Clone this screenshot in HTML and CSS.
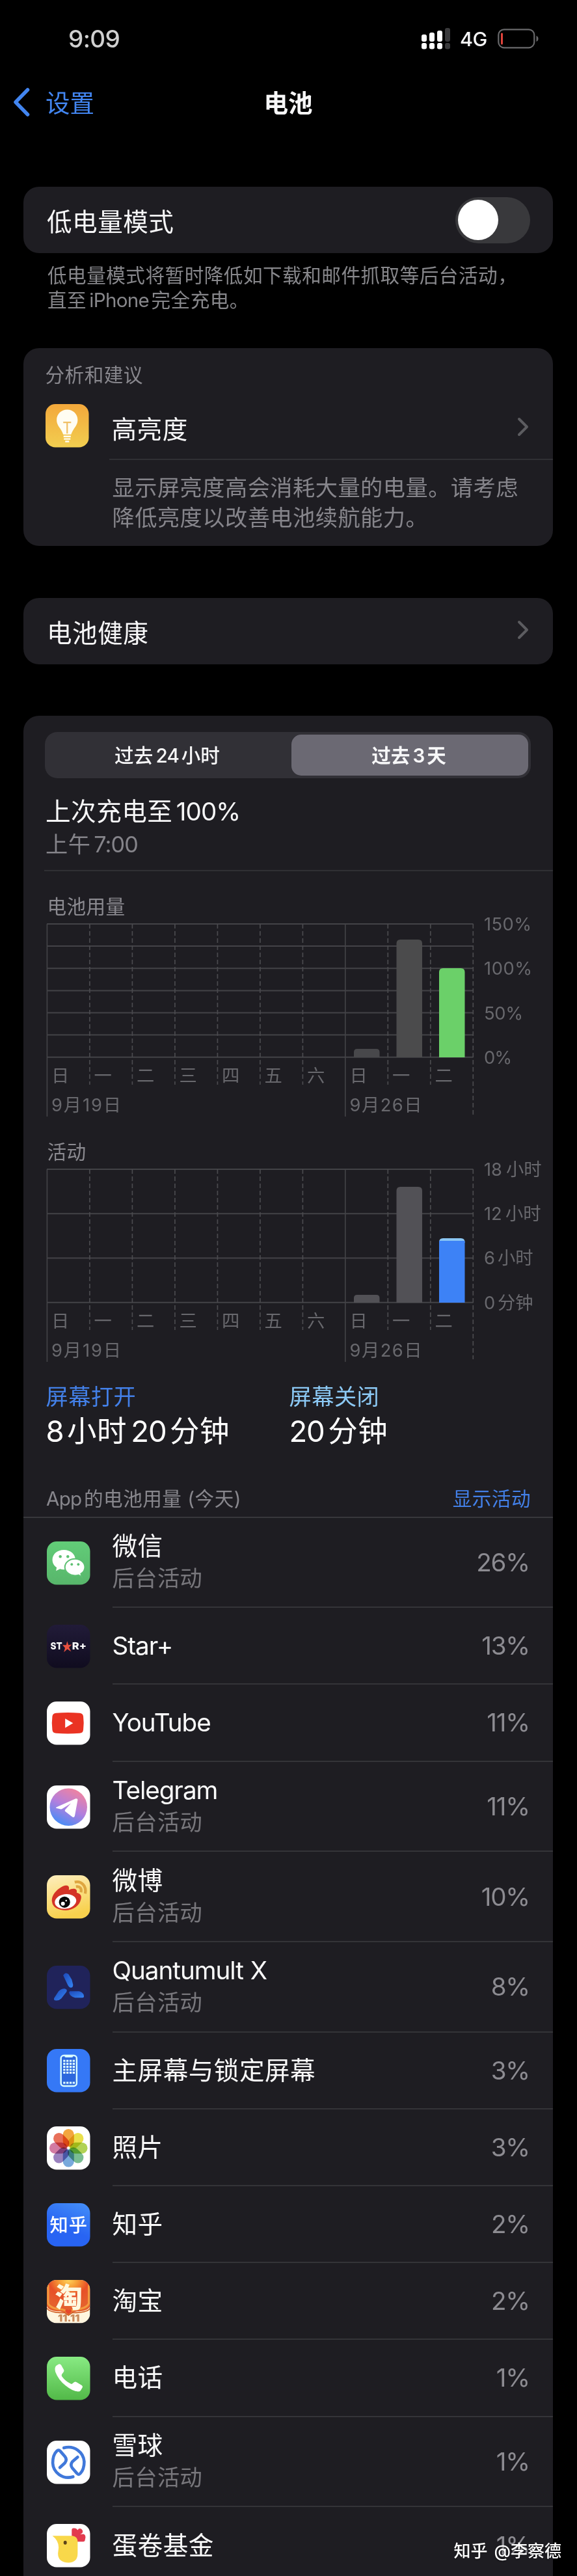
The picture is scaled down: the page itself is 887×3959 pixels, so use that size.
FILE: index.html
```html
<!DOCTYPE html>
<html lang="zh-CN">
<head>
<meta charset="utf-8">
<title>电池</title>
<link rel="stylesheet" href="styles.css">
</head>
<body>
<main class="page">
  <header class="status">
    <span class="clock">9:09</span>
    <svg class="signal" viewBox="0 0 44 34" width="44" height="34">
      <g fill="#fff"><rect x="0" y="10" width="8" height="11" rx="3"/><rect x="12" y="7" width="8" height="14" rx="3"/><rect x="24" y="4" width="8" height="17" rx="3"/><rect x="0" y="23" width="8" height="9.500" rx="3"/><rect x="12" y="23" width="8" height="9.500" rx="3"/><rect x="24" y="23" width="8" height="9.500" rx="3"/></g>
      <g fill="#3a3a3c"><rect x="36" y="0" width="8" height="21" rx="3"/><rect x="36" y="23" width="8" height="9.500" rx="3"/></g>
    </svg>
    <span class="network">4G</span>
    <svg class="battery" viewBox="0 0 64 32" width="64" height="32">
      <rect x="1.300" y="1.300" width="55" height="28" rx="8.500" fill="none" stroke="#69696b" stroke-width="2.200"/>
      <rect x="5" y="6.500" width="3" height="18" rx="1.500" fill="#e0443c"/>
      <path d="M59.500 11v9c4-1.500 4-7.500 0-9z" fill="#69696b"/>
    </svg>
  </header>
  <nav class="nav">
    <a class="back"><svg viewBox="0 0 26 44" width="26" height="44"><path d="M22.500 3 4 22l18.500 19" fill="none" stroke="#4285f0" stroke-width="5.500" stroke-linecap="round" stroke-linejoin="round"/></svg><span>设置</span></a>
    <h1 class="title">电池</h1>
  </nav>

  <section class="card link-card first">
    <span>低电量模式</span>
    <span class="toggle"><i class="knob"></i></span>
  </section>
  <p class="note">低电量模式将暂时降低如下载和邮件抓取等后台活动，<br>直至<span class="n">iPhone</span>完全充电。</p>

  <section class="card insight">
    <h2 class="caption">分析和建议</h2>
    <div class="tip">
      <svg class="icon" viewBox="0 0 66 66">
        <defs><linearGradient id="amber" x2="0" y2="1"><stop stop-color="#f3a83b"/><stop offset="1" stop-color="#f2ce50"/></linearGradient></defs>
        <rect width="66" height="66" rx="15" fill="url(#amber)"/>
        <path d="M33 8.500c-9 0-16 7-16 15.500 0 6 2.500 9 5.500 13.500 2.500 4 3.500 6 4.500 9h12c1-3 2-5 4.500-9C46.500 33 49 30 49 24 49 15.500 42 8.500 33 8.500z" fill="#fffdf2"/>
        <path d="M27 28h12M33 28v17" stroke="#f0bf65" stroke-width="2.200"/><path d="M27.500 49.300h11M28 53.200h10M30 57h6" stroke="#fffdf2" stroke-width="2.400"/>
      </svg>
      <div class="tip-main"><span>高亮度</span><svg class="chev" viewBox="0 0 18 30"><path d="m3 3 12 12L3 27" fill="none" stroke="#5c5c60" stroke-width="4" stroke-linecap="round" stroke-linejoin="round"/></svg></div>
    </div>
    <p class="advice">显示屏亮度高会消耗大量的电量。请考虑<br>降低亮度以改善电池续航能力。</p>
  </section>

  <section class="card link-card health">
    <span>电池健康</span>
    <svg class="chev" viewBox="0 0 18 30"><path d="m3 3 12 12L3 27" fill="none" stroke="#5c5c60" stroke-width="4" stroke-linecap="round" stroke-linejoin="round"/></svg>
  </section>

  <section class="card usage">
    <div class="segments"><span class="segment">过去<span class="n">24</span>小时</span><span class="segment active">过去<span class="n">3</span>天</span></div>
    <h2 class="charged">上次充电至<span class="n">100%</span></h2>
    <p class="charged-at">上午<span class="n">7:00</span></p>
    <hr class="rule">

    <svg class="chart" viewBox="36 1339 814 401" width="814" height="401">
      <text class="name" x="72.500" y="1403.500">电池用量</text>
      <path class="line" d="M72 1420H727.500M72 1454.100H727.500M72 1488.200H727.500M72 1522.400H727.500M72 1556.500H727.500M72 1590.600H727.500M72 1624.700H727.500"/>
      <path class="line thin" d="M72.400 1420V1716M530.800 1420V1716"/>
      <path class="line dash" d="M137.900 1420V1667M203.400 1420V1667M268.900 1420V1667M334.400 1420V1667M399.900 1420V1667M465.400 1420V1667M596.300 1420V1667M661.800 1420V1667M727.300 1420V1713"/>
      <path fill="#48484b" d="M544 1625v-8q0-5 5-5h29.500q5 0 5 5v8z"/>
      <path fill="#4b4b4c" d="M609.500 1625V1450q0-6 6-6H643q6 0 6 6v175z"/>
      <path fill="#6bd069" d="M675 1625V1494q0-6 6-6h27.500q6 0 6 6v131z"/>
      <g class="axis"><text x="79" y="1662.500">日</text><text x="144.500" y="1662.500">一</text><text x="210" y="1662.500">二</text><text x="275.500" y="1662.500">三</text><text x="341" y="1662.500">四</text><text x="406.500" y="1662.500">五</text><text x="472" y="1662.500">六</text><text x="537.500" y="1662.500">日</text><text x="603" y="1662.500">一</text><text x="668.500" y="1662.500">二</text>
      <text x="79" y="1708" textLength="107">9月19日</text><text x="537.500" y="1708" textLength="111">9月26日</text>
      <text x="744" y="1430" textLength="73">150%</text><text x="744" y="1498" textLength="74">100%</text><text x="744" y="1566.500" textLength="60">50%</text><text x="744" y="1634.500" textLength="43">0%</text></g>
    </svg>

    <svg class="chart" viewBox="36 1740 814 370" width="814" height="370">
      <text class="name" x="72.500" y="1780.500">活动</text>
      <path class="line" d="M72 1797H727.500M72 1865.200H727.500M72 1933.500H727.500M72 2001.800H727.500"/>
      <path class="line thin" d="M72.400 1797V2093M530.800 1797V2093"/>
      <path class="line dash" d="M137.900 1797V2044M203.400 1797V2044M268.900 1797V2044M334.400 1797V2044M399.900 1797V2044M465.400 1797V2044M596.300 1797V2044M661.800 1797V2044M727.300 1797V2089"/>
      <path fill="#525156" d="M544 2002v-7q0-5 5-5h29.500q5 0 5 5v7z"/>
      <path fill="#525156" d="M609.500 2002V1830q0-6 6-6H643q6 0 6 6v172z"/>
      <path fill="#8ac6f3" d="M675 1910v-1q0-6 6-6h27.500q6 0 6 6v1z"/>
      <path fill="#3d82f6" d="M675 2002v-95h39.500v95z"/>
      <g class="axis"><text x="79" y="2039.500">日</text><text x="144.500" y="2039.500">一</text><text x="210" y="2039.500">二</text><text x="275.500" y="2039.500">三</text><text x="341" y="2039.500">四</text><text x="406.500" y="2039.500">五</text><text x="472" y="2039.500">六</text><text x="537.500" y="2039.500">日</text><text x="603" y="2039.500">一</text><text x="668.500" y="2039.500">二</text>
      <text x="79" y="2085" textLength="107">9月19日</text><text x="537.500" y="2085" textLength="111">9月26日</text>
      <text x="744" y="1806.500">18<tspan x="778">小时</tspan></text><text x="744" y="1875">12<tspan x="777">小时</tspan></text><text x="744" y="1943">6<tspan x="765">小时</tspan></text><text x="744" y="2011.500">0<tspan x="765">分钟</tspan></text></g>
    </svg>

    <div class="screen">
      <div class="stat"><p class="stat-label on">屏幕打开</p><p class="stat-value"><span class="n lead">8</span>小时<span class="n">20</span>分钟</p></div>
      <div class="stat"><p class="stat-label off">屏幕关闭</p><p class="stat-value"><span class="n lead">20</span>分钟</p></div>
    </div>

    <div class="list-head"><span><span class="n lead">App</span>的电池用量 (今天)</span><a>显示活动</a></div>
    <ul class="apps">
      <li class="app tall">
        <svg class="icon" viewBox="0 0 66 66"><defs><linearGradient id="green" x2="0" y2="1"><stop stop-color="#62cc78"/><stop offset="1" stop-color="#58b66b"/></linearGradient></defs><rect width="66" height="66" rx="15" fill="url(#green)"/>
          <path d="M26 13C16 13 8.500 19.500 8.500 28c0 5 2.500 9 6.500 11.700L14 45l6-3c2 .6 4 .9 6 .9 10 0 17.500-6.500 17.500-15S36 13 26 13z" fill="#fff"/>
          <path d="M43 26.500c-8.500 0-15.500 5.600-15.500 12.700S34.500 52 43 52c2 0 3.600-.3 5.200-.8l5 2.800-1.200-4.800c4-2.400 6-5.800 6-10 0-7-6.500-12.700-15-12.700z" fill="#fff" stroke="#5dc072" stroke-width="2"/><g fill="#5dc072"><circle cx="20.500" cy="23" r="2.200"/><circle cx="32" cy="23" r="2.200"/><circle cx="38" cy="35" r="1.900"/><circle cx="48" cy="35" r="1.900"/></g></svg>
        <div class="row"><div><b>微信</b><small>后台活动</small></div><em>26%</em></div></li>
      <li class="app">
        <svg class="icon" viewBox="0 0 66 66"><defs><linearGradient id="night" x2="0" y2="1"><stop stop-color="#211b38"/><stop offset="1" stop-color="#100c1f"/></linearGradient></defs><rect width="66" height="66" rx="15" fill="url(#night)"/><text class="star-word" x="5.500" y="38" textLength="18" lengthAdjust="spacingAndGlyphs">ST</text><text class="star-word" x="38.500" y="38" textLength="22" lengthAdjust="spacingAndGlyphs">R+</text><path d="m31 25 2 6 5-.8-4.200 4.300L37 41l-5.800-3.800L26 42l1.800-6.500L24 31l5.500.1z" fill="#e8503f"/></svg>
        <div class="row"><div><b class="latin">Star+</b></div><em>13%</em></div></li>
      <li class="app">
        <svg class="icon" viewBox="0 0 66 66"><rect width="66" height="66" rx="15" fill="#fff"/><path d="M15 17.500q18-1.500 36 0 5 .3 5.600 5 1.400 10.500 0 21-.6 4.700-5.600 5-18 1.500-36 0-5-.3-5.600-5-1.400-10.500 0-21 .6-4.700 5.600-5z" transform="translate(-1)" fill="#ea3323"/><path d="m28 26 12 7-12 7.200z" fill="#fff"/></svg>
        <div class="row"><div><b class="latin">YouTube</b></div><em>11%</em></div></li>
      <li class="app tall">
        <svg class="icon" viewBox="0 0 66 66"><defs><linearGradient id="tele" x1=".25" y1="1" x2=".75" y2="0"><stop stop-color="#3f8df8"/><stop offset=".5" stop-color="#b37fdd"/><stop offset="1" stop-color="#f5839b"/></linearGradient></defs><rect width="66" height="66" rx="15" fill="#fff"/><circle cx="33" cy="33" r="28.500" fill="url(#tele)"/><path d="M14.500 33.200 44 20.200q3.300-1 3 2.500l-4.300 23.500q-.7 3.600-4 1.600L28.500 40q-2-1.600 0-3.600l8.200-9-13 8.200q-1.500.9-3.400.3l-5.500-1.200q-1.800-.6-.3-1.500z" fill="#fff"/></svg>
        <div class="row"><div><b class="latin">Telegram</b><small>后台活动</small></div><em>11%</em></div></li>
      <li class="app tall">
        <svg class="icon" viewBox="0 0 66 66"><defs><linearGradient id="sun" x2=".25" y2="1"><stop stop-color="#fdeebe"/><stop offset="1" stop-color="#f8d14d"/></linearGradient></defs><rect width="66" height="66" rx="15" fill="url(#sun)"/><path d="M8 41c-2-10 8-21 19-25 5-1.600 8 1 6.500 6.500 6-3.500 14-2.500 12 4 6 1.500 8 5 6.500 10-2 10-12 17-23 17S9 49.500 8 41z" fill="#d43326"/><ellipse cx="28.500" cy="40" rx="16.500" ry="11" transform="rotate(-8 28.500 40)" fill="#fff"/><circle cx="27" cy="41" r="8.500" fill="#080808"/><circle cx="24.500" cy="43.500" r="3" fill="#fff"/><circle cx="29.500" cy="38.800" r="1.300" fill="#fff"/><path d="M42.500 10.500C53 8 61 17 58.500 28M44.500 17.500c6-1 9 3 7.500 8.500" fill="none" stroke="#dfa640" stroke-width="4.200"/></svg>
        <div class="row"><div><b>微博</b><small>后台活动</small></div><em>10%</em></div></li>
      <li class="app tall">
        <svg class="icon" viewBox="0 0 66 66"><defs><linearGradient id="blade" x2="1" y2="1"><stop stop-color="#1d49b8"/><stop offset="1" stop-color="#3484f4"/></linearGradient></defs><rect width="66" height="66" rx="15" fill="#20235a"/><g fill="url(#blade)"><path d="M25 15q3-6 8-2l5 8 2 8q0 5-4 4.500-3-1-5-6z"/><path d="M11 49.500 18 39q4-4 9-4 5 1 3 5l-8 10q-3 3-7 3-5 .5-4-3.500z"/><path d="M35 39h14q5 1 7 5 2 5-2 5H43q-8-2-9-8z"/></g></svg>
        <div class="row"><div><b class="latin">Quantumult<span class="gap"></span>X</b><small>后台活动</small></div><em>8%</em></div></li>
      <li class="app">
        <svg class="icon" viewBox="0 0 66 66"><rect width="66" height="66" rx="15" fill="#3578f6"/><rect x="21.500" y="10" width="24" height="46.500" rx="4.500" fill="#2d68dd" stroke="#d8fbff" stroke-width="2.400"/><path d="M27 9h13v2q0 2-2 2h-9q-2 0-2-2z" fill="#d8fbff"/><path d="M25 18.200h18M25 22.700h18M25 27.200h18M25 31.700h18M25 36.200h18M25 51.500h18" stroke="#e2fdff" stroke-width="3" stroke-dasharray="3.300 1.500"/></svg>
        <div class="row"><div><b>主屏幕与锁定屏幕</b></div><em>3%</em></div></li>
      <li class="app">
        <svg class="icon" viewBox="0 0 66 66"><rect width="66" height="66" rx="15" fill="#fff"/><g class="petals"><rect x="24.500" y="4" width="17" height="27" rx="8.500" fill="#f3a63f"/><rect x="24.500" y="4" width="17" height="27" rx="8.500" fill="#eae04b" transform="rotate(45 33 33)"/><rect x="24.500" y="4" width="17" height="27" rx="8.500" fill="#b1d255" transform="rotate(90 33 33)"/><rect x="24.500" y="4" width="17" height="27" rx="8.500" fill="#79bd92" transform="rotate(135 33 33)"/><rect x="24.500" y="4" width="17" height="27" rx="8.500" fill="#78a9dc" transform="rotate(180 33 33)"/><rect x="24.500" y="4" width="17" height="27" rx="8.500" fill="#9a82bf" transform="rotate(225 33 33)"/><rect x="24.500" y="4" width="17" height="27" rx="8.500" fill="#d27ba3" transform="rotate(270 33 33)"/><rect x="24.500" y="4" width="17" height="27" rx="8.500" fill="#e8705a" transform="rotate(315 33 33)"/></g></svg>
        <div class="row"><div><b>照片</b></div><em>3%</em></div></li>
      <li class="app">
        <svg class="icon" viewBox="0 0 66 66"><defs><linearGradient id="blue" x1="1" x2=".6" y2="1"><stop stop-color="#4590f8"/><stop offset=".7" stop-color="#2864f3"/></linearGradient></defs><rect width="66" height="66" rx="15" fill="url(#blue)"/><text class="zhihu" x="4.500" y="43.500" textLength="57">知乎</text></svg>
        <div class="row"><div><b>知乎</b></div><em>2%</em></div></li>
      <li class="app">
        <svg class="icon" viewBox="0 0 66 66"><defs><radialGradient id="tao" cx=".5" cy="0" r=".75"><stop stop-color="#ffd35a"/><stop offset=".3" stop-color="#f69a35"/><stop offset=".6" stop-color="#e75027"/><stop offset="1" stop-color="#e5602d"/></radialGradient><clipPath id="tao-tile"><rect width="66" height="66" rx="15"/></clipPath></defs><g clip-path="url(#tao-tile)"><rect width="66" height="66" fill="#fff5df"/><path d="M0 0h66v40q-3 8-20 8l-9 2-4 4-4-4-9-2Q3 48 0 40z" fill="url(#tao)"/><path d="M2 8v28q4 8 21 9 7 1 10 7 3-6 10-7 17-1 21-9V8" fill="none" stroke="#f39a3e" stroke-width="3"/><path d="M0 43q3 6 20 7h7l6 4 6-4h7q17-1 20-7" fill="none" stroke="#cf5b20" stroke-width="1.500"/><path d="M28 46.500q3-3 5 0 2-3 5 0 0 3-5 6-5-3-5-6z" fill="#e5472b"/></g><text class="tao-word" x="33.500" y="42" text-anchor="middle">淘</text><text class="sale" x="17" y="64" textLength="33" lengthAdjust="spacingAndGlyphs">11.11</text></svg>
        <div class="row"><div><b>淘宝</b></div><em>2%</em></div></li>
      <li class="app">
        <svg class="icon" viewBox="0 0 66 66"><defs><linearGradient id="phone" x2="0" y2="1"><stop stop-color="#88ea83"/><stop offset="1" stop-color="#52b948"/></linearGradient></defs><rect width="66" height="66" rx="15" fill="url(#phone)"/><path d="m14 14 4-2.500q2.500-1 4 1.500l4 7q1 2-1 4l-2 2.500q-1 1.500 0 3.500 5 7 13 11 2 1 3 0l2.500-2q2-1.500 4 0l7.500 4.500q2.500 2 1 4l-2.500 4q-1 1.500-4 1.500-8 0-19-9T13 23q-1.500-6 1-9z" fill="#fff"/></svg>
        <div class="row"><div><b>电话</b></div><em>1%</em></div></li>
      <li class="app tall">
        <svg class="icon" viewBox="0 0 66 66"><rect width="66" height="66" rx="15" fill="#fff"/><g fill="none" stroke="#4078da" stroke-width="4.600" stroke-linecap="round" stroke-linejoin="round"><path d="M26 11C42 6.500 56 18 57 32q0 12-6 18-2.500 3-5 0l-7-8q-4-5 0-10l8-7"/><path d="M40 55C24 60 9.500 48 9 34q0-12 6-18 3-3 5.500 0l7 8q4 5 0 10l-7.500 7"/></g></svg>
        <div class="row"><div><b>雪球</b><small>后台活动</small></div><em>1%</em></div></li>
      <li class="app last">
        <svg class="icon" viewBox="0 0 66 66"><rect width="66" height="66" rx="15" fill="#fff"/><path d="M38 18V9q0-3 3-2.500 4-.5 6 3 2-4 6-1.500 3 3 1 6l-3 2 5-.5q3 1 3 5l-1 5q-1 2-4 1.500h-7q-8-1-9-9z" fill="#e23b4e"/><path d="M8.500 18H39q8 1 8 9v18q0 14-14 14-16 0-16-14l1-9q0-11-9.500-18z" fill="#f9d84a"/><ellipse cx="28" cy="28.500" rx="2.500" ry="3" fill="#5c4419"/></svg>
        <div class="row"><div><b>蛋卷基金</b></div><em>1%</em></div></li>
    </ul>
  </section>
  <div class="watermark"><span>知乎</span><span>@李察德</span></div>
</main>
</body>
</html>
```
FILE: styles.css
```css
* { box-sizing: border-box; margin: 0; padding: 0; }
body { background: #000; }
.page {
  position: relative;
  width: 887px;
  height: 3959px;
  overflow: hidden;
  background: #000;
  color: #f7f7f8;
  font-family: Inter, "Noto Sans CJK SC", sans-serif;
  font-size: 38.6px;
  letter-spacing: .5px;
}
.n { margin: 0 .12em 0 .14em; letter-spacing: -.025em; }
.lead { margin-left: 0; }

.status { display: flex; align-items: center; height: 119px; padding-left: 105px; }
.clock { width: 543px; font-size: 37px; font-weight: 500; letter-spacing: -.6px; color: #d0d0d0; line-height: 50px; }
.signal { margin-right: 15px; }
.network { width: 58px; font-size: 30.5px; font-weight: 500; letter-spacing: -.5px; line-height: 50px; }
.nav { display: grid; grid-template-columns: 1fr auto 1fr; align-items: center; height: 76px; padding-left: 20px; }
.back { display: flex; align-items: center; gap: 24px; color: #4285f0; font-size: 37.5px; letter-spacing: 0; }
.back span { margin-top: -4px; }
.title { margin: -4px 0 0 -21px; font-size: 37.5px; font-weight: 700; letter-spacing: 0; }

.card { width: 814px; margin-left: 36px; border-radius: 24px; background: #1e1d22; }
.link-card { display: flex; align-items: center; justify-content: space-between; height: 102px; padding: 0 35px 0 36px; }
.first { margin-top: 92px; }
.toggle { width: 115px; height: 71px; padding: 4px; border-radius: 36px; background: #39393c; }
.knob { display: block; width: 62px; height: 62px; border-radius: 50%; background: #fff; }
.note { height: 146px; padding: 16px 0 0 73px; font-size: 29.6px; line-height: 37.5px; letter-spacing: .5px; color: #87878b; white-space: nowrap; }

.insight { height: 303.5px; }
.caption { height: 82px; padding-left: 33.5px; font-size: 29.6px; font-weight: 400; line-height: 82px; letter-spacing: .5px; color: #88878d; }
.tip { display: flex; height: 90px; padding-left: 33.5px; }
.icon { display: block; flex: none; width: 66.500px; height: 66.500px; overflow: visible; }
.tip .icon { margin-top: 4px; }
.tip-main { display: flex; flex: 1; align-items: center; justify-content: space-between; margin-left: 32px; padding: 6px 37px 14px 3.5px; border-bottom: 2px solid #303034; }
.chev { width: 18px; height: 30px; margin-top: -3px; }
.advice { padding: 20px 0 0 136.5px; font-size: 34.2px; line-height: 46px; letter-spacing: .5px; color: #86858b; white-space: nowrap; }
.health { margin-top: 80px; padding-right: 37px; }

.usage { height: 2900px; margin-top: 79.5px; padding-top: 25px; }
.segments { display: grid; grid-template-columns: 375px 1fr; height: 71px; margin: 0 34px 0 33px; padding: 4px; border-radius: 19px; background: #313036; }
.segment { display: grid; grid-auto-flow: column; place-content: center; padding-right: 7px; font-size: 29.6px; font-weight: 500; line-height: 62px; letter-spacing: 0; }
.active { padding-right: 3px; border-radius: 15px; background: #6b6973; font-weight: 600; }
.charged { margin: 26px 0 0 34px; font-size: 38.6px; font-weight: 400; line-height: 50px; }
.charged-at { margin: 1px 0 14px 34px; font-size: 34.2px; line-height: 50px; color: #85848a; }
.rule { height: 2px; margin-left: 32px; border: 0; background: #303034; }
.chart { display: block; }
.name { font-size: 29.6px; letter-spacing: .4px; fill: #8b8a90; }
.axis { font-size: 27.3px; letter-spacing: 0; fill: #68686d; }
.line { fill: none; stroke: #434347; stroke-width: 2; }
.thin { stroke-width: 1.6; }
.dash { stroke-width: 1.7; stroke-dasharray: 7 4; stroke: #4a4a4e; }

.screen { display: grid; grid-template-columns: 374px 1fr; height: 165px; padding: 15px 0 0 34.500px; }
.stat-label { font-size: 34.2px; line-height: 44px; }
.on { color: #4380e8; }
.off { color: #8cc9f5; }
.stat-value { margin-top: 6px; font-size: 45.5px; line-height: 50px; color: #fff; }
.list-head { display: flex; justify-content: space-between; height: 57.500px; padding: 0 34px 0 35px; border-bottom: 2px solid #38383c; font-size: 29.6px; line-height: 56px; color: #88878d; }
.list-head a { color: #4380e8; }
.apps { list-style: none; }
.app { display: flex; align-items: center; height: 118.2px; padding-left: 36px; }
.tall { height: 138.700px; }
.row { display: flex; flex: 1; align-items: center; justify-content: space-between; height: 100%; margin-left: 34px; padding-right: 36px; border-bottom: 2px solid #343438; }
.row b, .row small { display: block; line-height: 50px; }
.row b { font-weight: 400; color: #fafafa; }
.row .latin { letter-spacing: -1px; }
.row small { font-size: 34.2px; color: #78777c; }
.row em { font-style: normal; letter-spacing: -1.2px; color: #8c8b91; }
.gap { display: inline-block; width: .28em; }
.last .row { border: 0; }

.star-word { font: 800 15px Inter, sans-serif; letter-spacing: 0; fill: #fff; }
.petals rect { mix-blend-mode: multiply; }
.petals { isolation: isolate; }
.zhihu { font: 500 28px "Noto Sans CJK SC", sans-serif; letter-spacing: 0; fill: #fff; }
.tao-word { font: 900 42px/1 "Noto Sans CJK SC", sans-serif; letter-spacing: 0; fill: #fff8df; }
.sale { font: 900 15px Inter, sans-serif; letter-spacing: 0; fill: #c98a5b; }
.watermark { position: absolute; right: 24px; bottom: 13px; display: flex; gap: 10px; font-size: 26px; font-weight: 500; line-height: 50px; letter-spacing: 0; color: #fff; text-shadow: 0 1px 2px #0008; }
```
